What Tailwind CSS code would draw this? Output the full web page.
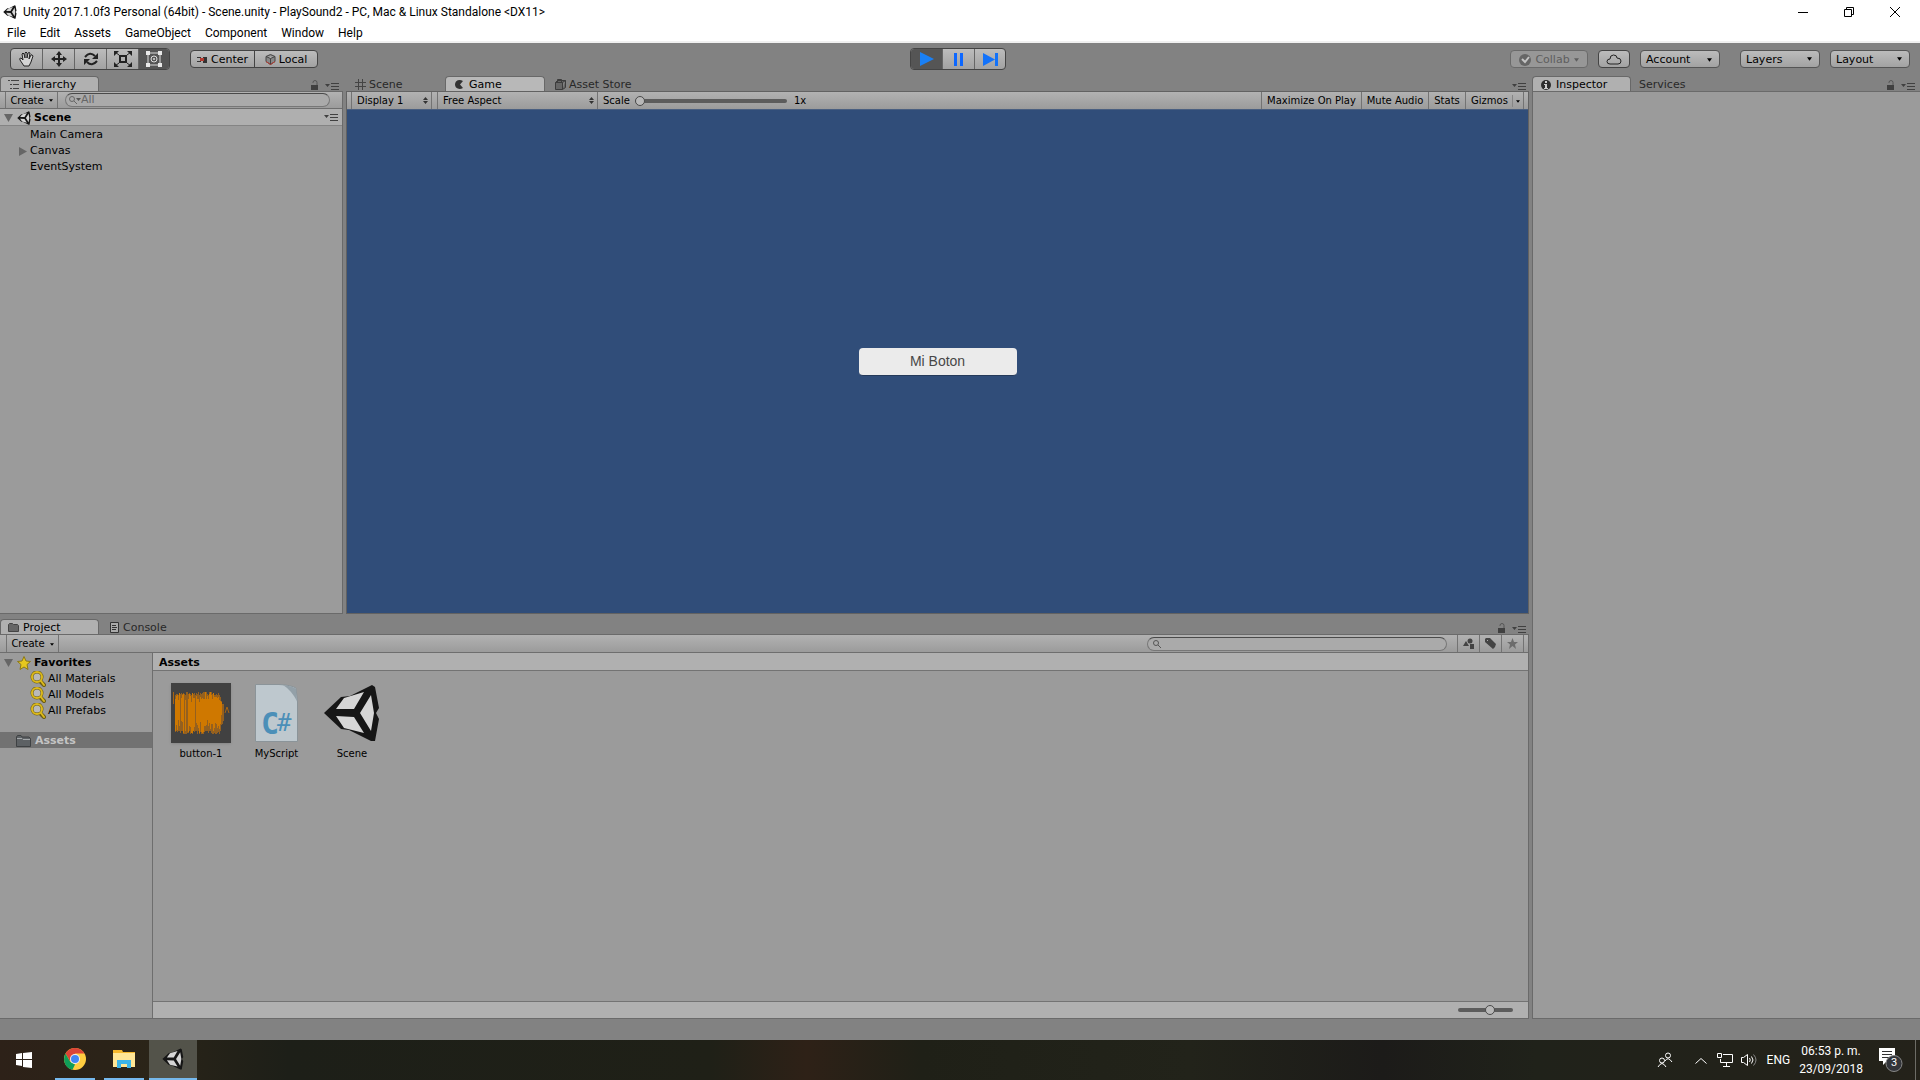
<!DOCTYPE html>
<html lang="en">
<head>
    <meta charset="UTF-8">
    <meta name="viewport" content="width=device-width, initial-scale=1.0">
    <title>Unity 2017.1.0f3 Personal (64bit) - Scene.unity - PlaySound2</title>
    <script src="https://cdn.jsdelivr.net/npm/@tailwindcss/browser@4"></script>
</head>
<body class="h-screen flex flex-col overflow-hidden bg-[#828282] text-[11px] leading-4 text-black font-['DejaVu_Sans',Verdana,sans-serif]">

    <!-- Shared icons -->
    <svg class="hidden">
        <symbol id="unity" viewBox="0 0 56 58">
            <path fill="#161616" d="M0 29 17 13 26 12 48 1 51 3 55 24 52 29 55 35 51 57 47 57 25 46 17 45Z"/>
            <path fill="#d6d6d6" d="M12 25 20 14 40 8 30 25ZM12 32 30 33 40 49 20 44ZM36 29 47 11 50 29 47 47Z"/>
        </symbol>
        <symbol id="lock" viewBox="0 0 8 10">
            <path fill="none" stroke="#555" d="M2 3V2.500Q2 .500 4 .500T6 2.500V6"/>
            <path fill="#404040" d="M0 5h7v5H0z"/>
        </symbol>
        <symbol id="menu" viewBox="0 0 14 7">
            <path fill="#404040" d="M0 1h5L2.500 4zM6 0h8v1H6zM6 3h8v1H6zM6 6h8v1H6z"/>
        </symbol>
        <symbol id="down" viewBox="0 0 6 4">
            <path fill="currentColor" d="M0 0h6L3 4z"/>
        </symbol>
        <symbol id="updown" viewBox="0 0 5 7">
            <path fill="#333" d="M0 3h5L2.500 0zM0 4h5L2.500 7z"/>
        </symbol>
        <symbol id="fav" viewBox="0 0 16 16">
            <path stroke="#6b5c14" stroke-width="4" stroke-linecap="round" d="m10 10 4 4"/>
            <circle cx="7" cy="6" r="5" fill="#b9b9b9" stroke="#6b5c14" stroke-width="3"/>
            <circle cx="7" cy="6" r="5" fill="none" stroke="#dcb91c" stroke-width="2"/>
            <path stroke="#dcb91c" stroke-width="2" stroke-linecap="round" d="m11 10 3 4"/>
        </symbol>
    </svg>

    <!-- Title bar -->
    <header class="shrink-0 bg-white border-b-2 border-[#f0f0f0] text-[12px] font-[Roboto,'Segoe_UI',sans-serif]">
        <div class="flex items-center h-[23px] pl-[3px] pr-0.5">
            <svg class="size-[14px]"><use href="#unity"/></svg>
            <h1 class="pl-1.5 flex-1 whitespace-nowrap">Unity 2017.1.0f3 Personal (64bit) - Scene.unity - PlaySound2 - PC, Mac &amp; Linux Standalone &lt;DX11&gt;</h1>
            <div class="flex">
                <button aria-label="Minimize" class="w-[46px] flex justify-center"><svg class="size-[10px]" viewBox="0 0 10 10"><path stroke="#000" d="M0 5.500h10"/></svg></button>
                <button aria-label="Restore" class="w-[46px] flex justify-center"><svg class="size-[10px]" viewBox="0 0 10 10"><path fill="none" stroke="#000" d="M.500 2.500h7v7h-7zM2.500 2V.500h7v7H8"/></svg></button>
                <button aria-label="Close" class="w-[46px] flex justify-center"><svg class="size-[10px]" viewBox="0 0 10 10"><path stroke="#000" d="m0 0 10 10M10 0 0 10"/></svg></button>
            </div>
        </div>
        <nav class="flex h-[18px] items-center gap-[14px] pl-[7px] pt-px">
            <a href="#">File</a>
            <a href="#">Edit</a>
            <a href="#">Assets</a>
            <a href="#">GameObject</a>
            <a href="#">Component</a>
            <a href="#">Window</a>
            <a href="#">Help</a>
        </nav>
    </header>

    <!-- Main toolbar -->
    <div class="shrink-0 grid grid-cols-[1fr_auto_1fr] items-center h-[33px] pr-1 pb-px">
        <div class="flex items-center gap-5 pl-[10px]">
            <div class="flex h-[22px] rounded border border-[#444] overflow-hidden divide-x divide-[#666] bg-linear-to-b from-[#bcbcbc] to-[#a2a2a2]">
                <button aria-label="Hand" class="w-8 flex items-center justify-center"><svg class="size-4" viewBox="0 0 16 16"><path fill="#d4d4d4" stroke="#222" d="M5 15 1 9Q0 7 2 7l2 2L3 3q1-2 2 0l1 4V2q1-2 2 0v5l1-5q1-1 2 0l-1 6 2-4q1-1 2 1l-2 6-2 4z"/></svg></button>
                <button aria-label="Move" class="w-8 flex items-center justify-center"><svg class="size-4" viewBox="0 0 16 16"><path fill="#222" d="m8 0 3 4H9v3h3V5l4 3-4 3V9H9v3h2l-3 4-3-4h2V9H4v2L0 8l4-3v2h3V4H5z"/></svg></button>
                <button aria-label="Rotate" class="w-8 flex items-center justify-center"><svg class="size-4" viewBox="0 0 16 16"><path fill="none" stroke="#222" stroke-width="2" d="M2 6q5-6 10-1M14 10q-5 6-10 1"/><path fill="#222" d="M15 2v6H9zM1 14V8h6z"/></svg></button>
                <button aria-label="Scale" class="w-8 flex items-center justify-center"><svg class="w-[18px] h-4" viewBox="0 0 18 16"><path fill="none" stroke="#222" stroke-width="2" d="M6 5h6v6H6z"/><path stroke="#222" d="m1 1 4 3M17 1l-4 3M1 15l4-3m12 3-4-3"/><path fill="#222" d="M0 0h5L0 5zM18 0h-5l5 5zM0 16h5l-5-5zM18 16h-5l5-5z"/></svg></button>
                <button aria-label="Rect" class="w-[30px] flex items-center justify-center bg-[#555]"><svg class="size-[18px]" viewBox="0 0 18 18"><path fill="none" stroke="#ddd" d="M3 3h12v12H3z"/><path fill="#e8e8e8" d="M1 1h4v4H1zM13 1h4v4h-4zM1 13h4v4H1zM13 13h4v4h-4z"/><circle cx="9" cy="9" r="3" fill="none" stroke="#ddd"/><circle cx="9" cy="9" r="1" fill="#ddd"/></svg></button>
            </div>
            <div class="flex h-[18px] rounded-sm border border-[#444] divide-x divide-[#444] bg-linear-to-b from-[#bcbcbc] to-[#a2a2a2]">
                <button class="w-16 flex items-center justify-center gap-1 pt-px"><svg class="w-[10px] h-2" viewBox="0 0 10 8"><path fill="#333" d="M0 1h4v1H0zM0 5h4v1H0zM6 1h4v6H6z"/><path fill="#b43a30" d="M3 2h4v3H3z"/></svg>Center</button>
                <button class="w-[62px] flex items-center justify-center gap-[3px] pt-px"><svg class="size-[11px]" viewBox="0 0 11 11"><path fill="#888" stroke="#444" d="m5.500.500 4.500 2v5l-4.500 3-4.500-3v-5zM1 2.500l4.500 2 4.500-2M5.500 4.500v6"/><path fill="none" stroke="#b43a30" d="m1 7.500 4.500 3 4.500-3"/></svg>Local</button>
            </div>
        </div>
        <div class="flex h-[22px] rounded border border-[#444] overflow-hidden divide-x divide-[#666] bg-linear-to-b from-[#bcbcbc] to-[#a2a2a2]">
            <button aria-label="Play" class="w-8 flex items-center justify-center bg-[#555]"><svg class="size-[14px]" viewBox="0 0 14 14"><path fill="#1a80f5" d="m0 0 14 7-14 7z"/></svg></button>
            <button aria-label="Pause" class="w-8 flex items-center justify-center"><svg class="w-[9px] h-[13px]" viewBox="0 0 9 13"><path fill="#0c67ff" d="M0 0h3v13H0zM6 0h3v13H6z"/></svg></button>
            <button aria-label="Step" class="w-[30px] flex items-center justify-center"><svg class="w-[15px] h-[13px]" viewBox="0 0 15 13"><path fill="#1272fa" d="m0 0 12 6.500L0 13zM12 0h3v13h-3z"/></svg></button>
        </div>
        <div class="flex justify-end gap-[10px] pr-[6px]">
            <button disabled class="w-[78px] h-[18px] rounded-sm border border-[#6a6a6a] bg-[#979797] text-[#5e5e5e] flex items-center justify-center gap-1 pt-px">
                <svg class="size-3" viewBox="0 0 12 12"><circle cx="6" cy="6" r="6" fill="#666"/><path fill="none" stroke="#c4c4c4" stroke-width="2" d="m3 5 3 3 4-5"/></svg>Collab<svg class="w-[5px] h-1"><use href="#down"/></svg>
            </button>
            <button aria-label="Cloud" class="w-8 h-[18px] rounded-sm border border-[#444] bg-linear-to-b from-[#bcbcbc] to-[#a2a2a2] flex items-center justify-center"><svg class="w-4 h-[11px]" viewBox="0 0 16 11"><path fill="none" stroke="#222" d="M4 10Q1 10 1 7.500T4 5Q4 1 7.500 1T11 4q4 0 4 3t-3 3z"/></svg></button>
            <button class="w-20 h-[18px] rounded-sm border border-[#555] bg-linear-to-b from-[#bcbcbc] to-[#a2a2a2] flex items-center justify-between pl-[5px] pr-[7px] pt-px">Account<svg class="w-[5px] h-1"><use href="#down"/></svg></button>
            <div class="relative ml-[10px]">
                <select aria-label="Layers" class="block w-20 h-[18px] appearance-none rounded-sm border border-[#555] bg-linear-to-b from-[#bcbcbc] to-[#a2a2a2] pl-[5px] pt-px"><option>Layers</option></select>
                <svg class="absolute right-2 top-[7px] w-[5px] h-1 pointer-events-none"><use href="#down"/></svg>
            </div>
            <div class="relative">
                <select aria-label="Layout" class="block w-20 h-[18px] appearance-none rounded-sm border border-[#555] bg-linear-to-b from-[#bcbcbc] to-[#a2a2a2] pl-[5px] pt-px"><option>Layout</option></select>
                <svg class="absolute right-2 top-[7px] w-[5px] h-1 pointer-events-none"><use href="#down"/></svg>
            </div>
        </div>
    </div>

    <div class="flex-1 min-h-0 flex gap-[3px]">
        <div class="flex-1 min-w-0 flex flex-col gap-[5px]">
            <div class="flex-1 min-h-0 flex gap-[3px]">

                <!-- Hierarchy -->
                <section class="w-[343px] shrink-0 flex flex-col">
                    <div class="flex h-[15px] shrink-0">
                        <h2 class="w-[99px] flex items-center gap-1 pl-2 pt-px rounded-t-sm border border-b-0 border-[#686868] bg-[#b0b0b0]"><svg class="w-[11px] h-[9px] -ml-px" viewBox="0 0 11 9"><path fill="#444" d="M0 0h2v1H0zM3 0h8v1H3zM2 4h2v1H2zM5 4h6v1H5zM2 8h2v1H2zM5 8h6v1H5z"/></svg>Hierarchy</h2>
                        <div class="flex-1 flex justify-end items-end gap-1.5 pr-1 pb-px">
                            <svg class="w-2 h-[10px]"><use href="#lock"/></svg>
                            <svg class="w-[14px] h-[7px]"><use href="#menu"/></svg>
                        </div>
                    </div>
                    <div class="flex-1 flex flex-col border-y border-r border-[#6a6a6a] bg-[#9b9b9b]">
                        <div class="flex h-[17px] items-center border-b border-[#6e6e6e] bg-linear-to-b from-[#b2b2b2] to-[#9b9b9b] pl-[5px]">
                            <button class="h-full w-[53px] border-x border-[#737373] text-[10px] flex items-center justify-center gap-[5px] pt-px">Create<svg class="w-1 h-[3px]"><use href="#down"/></svg></button>
                            <label class="ml-[7px] mr-3 flex-1 h-[14px] flex items-center rounded-full border border-[#777] border-t-[#4a4a4a] bg-[#aaa] pl-[3px]">
                                <svg class="w-3 h-2" viewBox="0 0 12 8"><circle cx="3" cy="3" r="2.500" fill="none" stroke="#666"/><path stroke="#666" d="m5 5 3 3"/><path fill="#555" d="M7 2h5L9.500 5z"/></svg>
                                <input aria-label="Search hierarchy" type="text" placeholder="All" class="flex-1 min-w-0 text-[11px] leading-3 outline-none placeholder:text-[#666]">
                            </label>
                        </div>
                        <div class="flex h-[17px] items-center border-b border-[#848484] bg-[#afafaf] px-1 pt-px">
                            <svg class="w-[9px] h-2" viewBox="0 0 9 8"><path fill="#666" d="M0 0h9L4.500 8z"/></svg>
                            <svg class="size-[14px] ml-1 mr-[3px]"><use href="#unity"/></svg>
                            <span class="flex-1 font-bold">Scene</span>
                            <svg class="w-[14px] h-[7px]"><use href="#menu"/></svg>
                        </div>
                        <ul class="pt-px">
                            <li class="h-4 pl-[30px]">Main Camera</li>
                            <li class="h-4 pl-[19px] flex items-center gap-[3px]"><svg class="w-2 h-[9px]" viewBox="0 0 8 9"><path fill="#666" d="M0 0v9l8-4.500z"/></svg>Canvas</li>
                            <li class="h-4 pl-[30px]">EventSystem</li>
                        </ul>
                    </div>
                </section>

                <!-- Game view -->
                <section class="flex-1 min-w-0 flex flex-col">
                    <div class="flex h-[15px] shrink-0 text-[#282828]">
                        <h2 class="w-[99px] flex items-center gap-[3px] pl-[9px] pt-0.5"><svg class="size-[11px]" viewBox="0 0 11 11"><path stroke="#444" d="M3.500 0v11M7.500 0v11M0 3.500h11M0 7.500h11"/></svg>Scene</h2>
                        <h2 class="w-[100px] flex items-center gap-[5px] pl-[9px] pt-px rounded-t-sm border border-b-0 border-[#686868] bg-[#b8b8b8] text-black"><svg class="size-[9px]" viewBox="0 0 9 9"><path fill="#333" d="M8 1 5 4.500 8 8Q4 10 1 7.500 -1 4.500 1 1.500 4-1 8 1z"/></svg>Game</h2>
                        <h2 class="flex items-center gap-[3px] pl-[10px] pt-0.5"><svg class="size-[11px]" viewBox="0 0 11 11"><path fill="#666" stroke="#3c3c3c" d="M.500 3.500h7v7h-7zM.500 3.500l2-2h8l-3 2M7.500 10.500l3-2v-7M2.500 3V.500h4V3"/></svg>Asset Store</h2>
                        <div class="flex-1 flex justify-end items-end pr-[3px] pb-px"><svg class="w-[14px] h-[7px]"><use href="#menu"/></svg></div>
                    </div>
                    <div class="flex-1 min-h-0 flex flex-col border border-[#626262]">
                        <div class="shrink-0 flex h-[17px] items-center bg-linear-to-b from-[#b2b2b2] to-[#9b9b9b] pl-1 text-[10px]">
                            <div class="relative h-full">
                                <select aria-label="Display" class="block h-full w-[81px] appearance-none border-x border-[#737373] pl-[5px] pt-px"><option>Display 1</option></select>
                                <svg class="absolute right-[4px] top-[5px] w-[5px] h-[7px] pointer-events-none"><use href="#updown"/></svg>
                            </div>
                            <div class="relative h-full ml-[5px]">
                                <select aria-label="Aspect" class="block h-full w-[161px] appearance-none border-x border-[#737373] pl-[5px] pt-px"><option>Free Aspect</option></select>
                                <svg class="absolute right-[4px] top-[5px] w-[5px] h-[7px] pointer-events-none"><use href="#updown"/></svg>
                            </div>
                            <label for="scale" class="px-[5px] pt-px">Scale</label>
                            <input id="scale" type="range" min="1" max="5" value="1" step="0.1" class="w-[152px] h-[10px] appearance-none [&::-webkit-slider-runnable-track]:h-1 [&::-webkit-slider-runnable-track]:rounded-full [&::-webkit-slider-runnable-track]:bg-[#5c5c5c] [&::-webkit-slider-thumb]:appearance-none [&::-webkit-slider-thumb]:size-[10px] [&::-webkit-slider-thumb]:-mt-[3px] [&::-webkit-slider-thumb]:rounded-full [&::-webkit-slider-thumb]:border [&::-webkit-slider-thumb]:border-[#4a4a4a] [&::-webkit-slider-thumb]:bg-[#b8b8b8]">
                            <span class="flex-1 pl-[7px] pt-px">1x</span>
                            <button class="h-full w-[100px] border-l border-[#737373] pt-px">Maximize On Play</button>
                            <button class="h-full w-[67px] border-l border-[#737373] pt-px">Mute Audio</button>
                            <button class="h-full w-[37px] border-l border-[#737373] pt-px">Stats</button>
                            <button class="h-full w-[59px] border-x border-[#737373] flex items-center pl-[5px] pt-px">Gizmos<span class="h-3 border-l border-[#858585] ml-1 pl-[3px] flex items-center"><svg class="w-1 h-[3px]"><use href="#down"/></svg></span></button>
                            <div class="w-1"></div>
                        </div>
                        <div class="flex-1 flex items-center justify-center bg-[#304d79] border-t border-[#4a5f80]">
                            <button class="w-[158px] h-7 rounded bg-[#ebebeb] border-b border-[#253a5a] text-[14px] text-[#474747] font-['Liberation_Sans',Arial,sans-serif]">Mi Boton</button>
                        </div>
                    </div>
                </section>
            </div>

            <!-- Project -->
            <section class="h-[400px] shrink-0 flex flex-col">
                <div class="flex h-[15px] shrink-0 text-[#282828]">
                    <h2 class="w-[99px] flex items-center gap-1 pl-[7px] pt-px rounded-t-sm border border-b-0 border-[#686868] bg-[#b0b0b0] text-black"><svg class="w-[11px] h-[9px]" viewBox="0 0 11 9"><path fill="#666" stroke="#444" d="M.500 8.500v-7l1-1h3l1 1h4l1 1v6z"/></svg>Project</h2>
                    <h2 class="flex items-center gap-1 pl-[11px] pt-0.5"><svg class="w-[9px] h-[11px]" viewBox="0 0 9 11"><path fill="#aaa" stroke="#333" d="M.500.500h8v10h-8zM2 3.500h4M2 5.500h5M2 7.500h4"/></svg>Console</h2>
                    <div class="flex-1 flex justify-end items-end gap-1.5 pr-[3px] pb-px">
                        <svg class="w-2 h-[10px]"><use href="#lock"/></svg>
                        <svg class="w-[14px] h-[7px]"><use href="#menu"/></svg>
                    </div>
                </div>
                <div class="flex-1 min-h-0 flex flex-col border-y border-r border-[#6a6a6a] bg-[#9b9b9b]">
                    <div class="shrink-0 flex h-[18px] items-center border-b border-[#6e6e6e] bg-linear-to-b from-[#b2b2b2] to-[#9b9b9b] pl-1.5">
                        <button class="h-full w-[53px] border-x border-[#737373] text-[10px] flex items-center justify-center gap-[5px] pt-px">Create<svg class="w-1 h-[3px]"><use href="#down"/></svg></button>
                        <div class="flex-1"></div>
                        <label class="mr-[10px] w-[300px] h-[14px] flex items-center rounded-full border border-[#777] border-t-[#4a4a4a] bg-[#aaa] pl-[5px]">
                            <svg class="size-2" viewBox="0 0 8 8"><circle cx="3" cy="3" r="2.500" fill="none" stroke="#555"/><path stroke="#555" d="m5 5 3 3"/></svg>
                            <input aria-label="Search project" type="text" class="flex-1 min-w-0 text-[11px] leading-3 outline-none">
                        </label>
                        <button aria-label="Search by type" class="h-full w-[22px] border-l border-[#737373] flex items-center justify-center"><svg class="size-[11px]" viewBox="0 0 11 11"><path fill="#444" d="M0 8 3 3l3 5zM7 6h4v5H7z"/><circle cx="7" cy="3" r="2.500" fill="#444"/></svg></button>
                        <button aria-label="Search by label" class="h-full w-[22px] border-l border-[#737373] flex items-center justify-center"><svg class="size-[11px]" viewBox="0 0 11 11"><path fill="#444" fill-rule="evenodd" d="M0 1 1 0h4l6 6-1 3-2 2-8-7zM2 2v1h1V2z"/></svg></button>
                        <button aria-label="Save search" class="h-full w-[23px] border-x border-[#737373] flex items-center justify-center"><svg class="size-[11px]" viewBox="0 0 11 11"><path fill="#6c6c6c" d="m5.500 0 1.500 4h4L8 6.500 9 11 5.500 8 2 11l1-4.500L0 4h4z"/></svg></button>
                        <div class="w-1"></div>
                    </div>
                    <div class="flex-1 min-h-0 flex">
                        <div class="w-[153px] shrink-0 border-r border-[#6e6e6e]">
                            <div class="h-4 flex items-center pl-1 mt-0.5 font-bold">
                                <svg class="w-[9px] h-2" viewBox="0 0 9 8"><path fill="#666" d="M0 0h9L4.500 8z"/></svg>
                                <svg class="size-[14px] ml-1 mr-[3px]" viewBox="0 0 14 14"><path fill="#e6c81e" stroke="#8c7817" d="m7 .500 2 4.500 4.500.500L10 8.500l1 5-4-2.500-4 2.500 1-5L.500 5.500 5 5z"/></svg>Favorites
                            </div>
                            <ul>
                                <li class="h-4 flex items-center pl-[30px] gap-0.5"><svg class="size-4"><use href="#fav"/></svg>All Materials</li>
                                <li class="h-4 flex items-center pl-[30px] gap-0.5"><svg class="size-4"><use href="#fav"/></svg>All Models</li>
                                <li class="h-4 flex items-center pl-[30px] gap-0.5"><svg class="size-4"><use href="#fav"/></svg>All Prefabs</li>
                            </ul>
                            <div class="h-4 flex items-center mt-[13px] pl-4 gap-1 pt-px bg-[#727272] text-[#c4c4c4] font-bold">
                                <svg class="w-[15px] h-3" viewBox="0 0 15 12"><path fill="#5d6164" stroke="#3e4143" d="M.500 11.500V2l1-1.500H5l1 1.500h7l1.500 1.500v8z"/><path stroke="#a3a7a9" d="M1 3.500h5l1 1h7"/></svg>Assets
                            </div>
                        </div>
                        <div class="flex-1 min-w-0 flex flex-col">
                            <div class="h-[18px] shrink-0 flex items-center border-b border-[#737373] bg-[#b0b0b0] pl-[6px] pt-0.5 font-bold">Assets</div>
                            <ul class="flex-1 flex pl-[10px] pt-3 text-[10px] text-center">
                                <li class="w-[76px]">
                                    <svg id="wave" class="size-[60px] mx-auto bg-[#414141] shadow-sm" viewBox="0 0 60 60"></svg>
                                    <p class="pt-[3px]">button-1</p>
                                </li>
                                <li class="w-[75px]">
                                    <div class="h-[60px] flex items-center justify-center">
                                        <svg class="w-[43px] h-[58px]" viewBox="0 0 43 58">
                                            <path fill="#bec8ce" stroke="#8b9499" d="M.500.500H24Q36 1 41 4l1.500 14v39.500H.500z"/>
                                            <path fill="#93a0a8" d="M28 1q10 1 13 4l1 12Q36 6 28 1z"/>
                                            <text x="6" y="50" class="font-['DejaVu_Sans_Mono',monospace] font-bold text-[30px]" fill="#4b8fb8">C</text>
                                            <text x="22" y="47" class="font-['DejaVu_Sans_Mono',monospace] text-[24px]" fill="#4b8fb8">#</text>
                                        </svg>
                                    </div>
                                    <p class="pt-[3px]">MyScript</p>
                                </li>
                                <li class="w-[76px]">
                                    <div class="h-[60px] flex items-center justify-center"><svg class="w-[56px] h-[58px]"><use href="#unity"/></svg></div>
                                    <p class="pt-[3px]">Scene</p>
                                </li>
                            </ul>
                            <div class="h-[17px] shrink-0 flex items-center justify-end border-t border-[#737373] bg-[#b0b0b0] pr-[15px]">
                                <input aria-label="Icon size" type="range" min="0" max="100" value="60" class="w-[55px] h-[10px] appearance-none [&::-webkit-slider-runnable-track]:h-1 [&::-webkit-slider-runnable-track]:rounded-full [&::-webkit-slider-runnable-track]:bg-[#5c5c5c] [&::-webkit-slider-thumb]:appearance-none [&::-webkit-slider-thumb]:size-[10px] [&::-webkit-slider-thumb]:-mt-[3px] [&::-webkit-slider-thumb]:rounded-full [&::-webkit-slider-thumb]:border [&::-webkit-slider-thumb]:border-[#4a4a4a] [&::-webkit-slider-thumb]:bg-[#b8b8b8]">
                            </div>
                        </div>
                    </div>
                </div>
            </section>
        </div>

        <!-- Inspector -->
        <section class="w-[388px] shrink-0 flex flex-col">
            <div class="flex h-[15px] shrink-0 text-[#282828]">
                <h2 class="w-[99px] flex items-center gap-[5px] pl-2 pt-px rounded-t-sm border border-b-0 border-[#686868] bg-[#b0b0b0] text-black"><svg class="size-[10px]" viewBox="0 0 10 10"><circle cx="5" cy="5" r="5" fill="#2c2c2c"/><path fill="#ccc" d="M4 1h2v2H4zM3 4h3v4h1v1H3V8h1V5H3z"/></svg>Inspector</h2>
                <h2 class="pl-2 pt-0.5 flex items-center">Services</h2>
                <div class="flex-1 flex justify-end items-end gap-1.5 pr-[5px] pb-px">
                    <svg class="w-2 h-[10px]"><use href="#lock"/></svg>
                    <svg class="w-[14px] h-[7px]"><use href="#menu"/></svg>
                </div>
            </div>
            <div class="flex-1 border border-r-0 border-[#6a6a6a] bg-[#9b9b9b]"></div>
        </section>
    </div>

    <!-- Status bar -->
    <div class="h-[21px] shrink-0"></div>

    <!-- Windows taskbar -->
    <footer class="h-10 shrink-0 flex items-stretch justify-between bg-[linear-gradient(90deg,#2d2118_0%,#2a2418_8%,#1d1f18_15%,#1f2017_37%,#2e2117_42%,#1f2017_48%,#22231a_62%,#1c1b19_72%,#20221a_80%,#24221a_100%)] text-white text-[12px] font-[Roboto,'Segoe_UI',sans-serif]">
        <div class="flex">
            <button aria-label="Start" class="w-[47px] flex items-center justify-center"><svg class="size-4" viewBox="0 0 16 16"><path fill="#fff" d="m0 2 6-1v6H0zM7 1l9-1v7H7zM0 8h6v6l-6-1zM7 8h9v8l-9-1z"/></svg></button>
            <button aria-label="Chrome" class="w-10 ml-2 border-b-2 border-[#76b9ed] flex items-center justify-center"><svg class="size-[22px]" viewBox="0 0 22 22"><circle cx="11" cy="11" r="11" fill="#ffcd40"/><path fill="#db4437" d="M1.500 5.500Q5 0 11 0t9.500 5.500H11L6.200 13.500z"/><path fill="#0f9d58" d="M1.500 5.500 6.200 13.700 11 16.500l-2.500 5.300Q2 20.500 .300 13.500-.500 9 1.500 5.500z"/><circle cx="11" cy="11" r="5" fill="#f1f1f1"/><circle cx="11" cy="11" r="4" fill="#4285f4"/></svg></button>
            <button aria-label="File Explorer" class="w-10 ml-[9px] border-b-2 border-[#76b9ed] flex items-center justify-center"><svg class="w-[22px] h-[18px]" viewBox="0 0 22 18"><path fill="#f5b82e" d="M0 0h9l1 2h12v15H0z"/><path fill="#ffe695" d="M0 3h22v14H0z"/><path fill="#3cb4e7" d="M4 10h14v8h-4v-4H8v4H4z"/></svg></button>
            <button aria-label="Unity" class="w-12 ml-[5px] border-b-2 border-[#76b9ed] bg-[#53534a] flex items-center justify-center"><svg class="size-[22px]"><use href="#unity"/></svg></button>
        </div>
        <div class="flex items-center border-r border-[#6d6c66] mr-1">
            <svg class="size-4" viewBox="0 0 16 16"><g fill="none" stroke="#fff"><circle cx="11" cy="3.500" r="2.500"/><path d="M8 9q3-5 7 1"/><circle cx="5" cy="8.500" r="2.500"/><path d="M1 15q4-7 8 0"/></g></svg>
            <svg class="w-3 h-[7px] ml-[22px]" viewBox="0 0 12 7"><path fill="none" stroke="#fff" d="m.500 6.500 5.500-5 5.500 5"/></svg>
            <svg class="w-4 h-[14px] ml-[10px]" viewBox="0 0 16 14"><path fill="none" stroke="#fff" d="M6 1.500h9.500v8h-12V6M.500.500h4v4h-4zM9.500 10v3M6 13.500h7"/></svg>
            <svg class="w-4 h-[14px] ml-2" viewBox="0 0 16 14"><path fill="none" stroke="#fff" d="M.500 4.500h2l4-3v11l-4-3h-2zM8.500 5q1.500 2 0 4M10.500 3.500q3 3.500 0 7"/><path fill="none" stroke="#888" d="M12.500 1.500q5 5.500 0 11"/></svg>
            <span class="ml-[10px]">ENG</span>
            <p class="ml-[9px] text-center leading-[18px]">06:53 p. m.<br>23/09/2018</p>
            <button aria-label="Notifications" class="relative ml-4 mr-3 w-6 h-6"><svg class="size-6" viewBox="0 0 24 24"><path fill="#fff" d="M0 0h16v13H8l-4 4v-4H0z"/><path stroke="#333" d="M3 3.500h10M3 6.500h10M3 9.500h7"/><circle cx="15" cy="15.500" r="8" fill="#33353a" stroke="#888"/></svg><span class="absolute left-3 top-[7px] text-[11px] leading-4">3</span></button>
        </div>
    </footer>

    <script>
        // audio clip thumbnail
        const wave = document.getElementById('wave');
        let seed = 7;
        function rand(n) {
            seed = (seed * 1103 + 377) % 7919;
            return seed % n;
        }
        let dark = '', bright = '';
        for (let x = 4; x < 53; x++) {
            const taper = x > 48 ? (x - 48) * 3 : 0;
            const top = 9 + rand(4) + taper;
            const bottom = 51 - rand(4) - taper;
            dark += `M${x + 0.5} ${top}V${bottom}`;
            if (rand(6) > 0) bright += `M${x + 0.5} ${top + rand(8)}V${bottom - rand(12)}`;
        }
        wave.innerHTML = `<path d="${dark}" stroke="#94601f"/><path d="${bright}" stroke="#cf7800"/><path d="M2.500 9V21M54 30l2-6 2 6" fill="none" stroke="#a86412"/>`;
    </script>
</body>
</html>
